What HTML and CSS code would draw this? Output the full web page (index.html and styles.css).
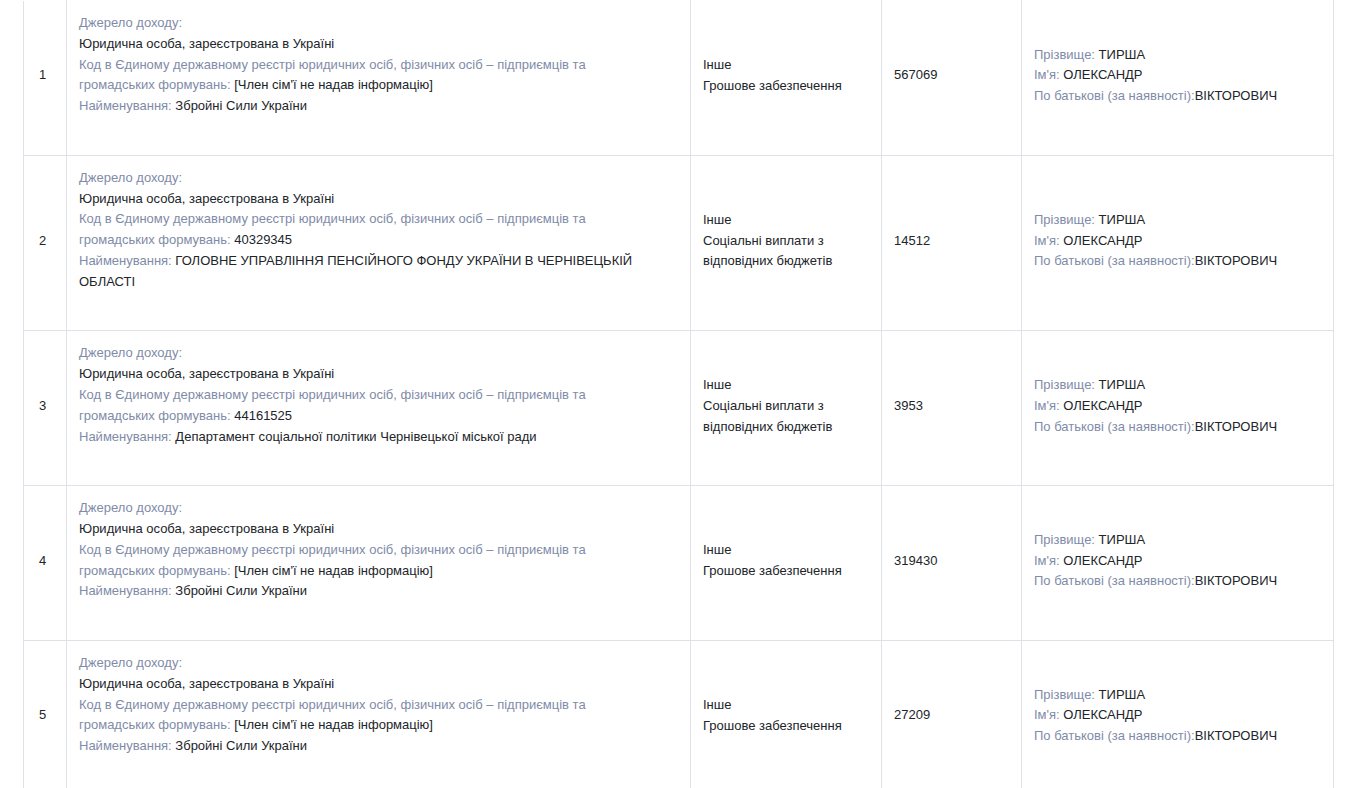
FILE: index.html
```html
<!DOCTYPE html>
<html lang="uk">
<head>
<meta charset="utf-8">
<title>Доходи</title>
<link rel="stylesheet" href="styles.css">
</head>
<body>
<div class="wrap">
<table class="tbl">
  <colgroup>
    <col class="c-num"><col class="c-src"><col class="c-type"><col class="c-sum"><col class="c-who">
  </colgroup>
  <tbody>
    <tr>
      <td class="num">1</td>
      <td class="src"><div class="blk">
        <div><span class="lbl">Джерело доходу:</span></div>
        <div>Юридична особа, зареєстрована в Україні</div>
        <div><span class="lbl">Код в Єдиному державному реєстрі юридичних осіб, фізичних осіб – підприємців та громадських формувань:</span> [Член сім'ї не надав інформацію]</div>
        <div><span class="lbl">Найменування:</span> Збройні Сили України</div>
      </div></td>
      <td class="mid">Інше<br>Грошове забезпечення</td>
      <td class="mid">567069</td>
      <td class="mid"><span class="lbl">Прізвище:</span> ТИРША<br><span class="lbl">Ім'я:</span> ОЛЕКСАНДР<br><span class="lbl">По батькові (за наявності):</span>ВІКТОРОВИЧ</td>
    </tr>
    <tr>
      <td class="num">2</td>
      <td class="src"><div class="blk">
        <div><span class="lbl">Джерело доходу:</span></div>
        <div>Юридична особа, зареєстрована в Україні</div>
        <div><span class="lbl">Код в Єдиному державному реєстрі юридичних осіб, фізичних осіб – підприємців та громадських формувань:</span> 40329345</div>
        <div><span class="lbl">Найменування:</span> ГОЛОВНЕ УПРАВЛІННЯ ПЕНСІЙНОГО ФОНДУ УКРАЇНИ В ЧЕРНІВЕЦЬКІЙ ОБЛАСТІ</div>
      </div></td>
      <td class="mid">Інше<br>Соціальні виплати з відповідних бюджетів</td>
      <td class="mid">14512</td>
      <td class="mid"><span class="lbl">Прізвище:</span> ТИРША<br><span class="lbl">Ім'я:</span> ОЛЕКСАНДР<br><span class="lbl">По батькові (за наявності):</span>ВІКТОРОВИЧ</td>
    </tr>
    <tr>
      <td class="num">3</td>
      <td class="src"><div class="blk">
        <div><span class="lbl">Джерело доходу:</span></div>
        <div>Юридична особа, зареєстрована в Україні</div>
        <div><span class="lbl">Код в Єдиному державному реєстрі юридичних осіб, фізичних осіб – підприємців та громадських формувань:</span> 44161525</div>
        <div><span class="lbl">Найменування:</span> Департамент соціальної політики Чернівецької міської ради</div>
      </div></td>
      <td class="mid">Інше<br>Соціальні виплати з відповідних бюджетів</td>
      <td class="mid">3953</td>
      <td class="mid"><span class="lbl">Прізвище:</span> ТИРША<br><span class="lbl">Ім'я:</span> ОЛЕКСАНДР<br><span class="lbl">По батькові (за наявності):</span>ВІКТОРОВИЧ</td>
    </tr>
    <tr>
      <td class="num">4</td>
      <td class="src"><div class="blk">
        <div><span class="lbl">Джерело доходу:</span></div>
        <div>Юридична особа, зареєстрована в Україні</div>
        <div><span class="lbl">Код в Єдиному державному реєстрі юридичних осіб, фізичних осіб – підприємців та громадських формувань:</span> [Член сім'ї не надав інформацію]</div>
        <div><span class="lbl">Найменування:</span> Збройні Сили України</div>
      </div></td>
      <td class="mid">Інше<br>Грошове забезпечення</td>
      <td class="mid">319430</td>
      <td class="mid"><span class="lbl">Прізвище:</span> ТИРША<br><span class="lbl">Ім'я:</span> ОЛЕКСАНДР<br><span class="lbl">По батькові (за наявності):</span>ВІКТОРОВИЧ</td>
    </tr>
    <tr>
      <td class="num">5</td>
      <td class="src"><div class="blk">
        <div><span class="lbl">Джерело доходу:</span></div>
        <div>Юридична особа, зареєстрована в Україні</div>
        <div><span class="lbl">Код в Єдиному державному реєстрі юридичних осіб, фізичних осіб – підприємців та громадських формувань:</span> [Член сім'ї не надав інформацію]</div>
        <div><span class="lbl">Найменування:</span> Збройні Сили України</div>
      </div></td>
      <td class="mid">Інше<br>Грошове забезпечення</td>
      <td class="mid">27209</td>
      <td class="mid"><span class="lbl">Прізвище:</span> ТИРША<br><span class="lbl">Ім'я:</span> ОЛЕКСАНДР<br><span class="lbl">По батькові (за наявності):</span>ВІКТОРОВИЧ</td>
    </tr>
  </tbody>
</table>
</div>
</body>
</html>
```
FILE: styles.css
```css
html, body {
  margin: 0;
  padding: 0;
  background: #ffffff;
}
body {
  font-family: "Liberation Sans", Arial, sans-serif;
  font-size: 13px;
  line-height: 1.6;
  color: #212529;
  overflow: hidden;
}
.wrap {
  padding: 0 17px 0 23px;
}
.tbl {
  width: 1310px;
  border-collapse: collapse;
  table-layout: fixed;
}
.c-num { width: 43px; }
.c-src { width: 624px; }
.c-type { width: 191px; }
.c-sum { width: 140px; }
.c-who { width: 312px; }
.tbl td {
  border: 1px solid #dfe1e6;
  padding: 12px 12px 16px 12px;
  vertical-align: middle;
  text-align: left;
}
.tbl tr:first-child td {
  border-top-color: #ffffff;
}
.tbl td.num {
  padding-left: 15px;
}
.tbl td.src {
  vertical-align: top;
  padding-right: 36px;
}
.blk {
  padding-bottom: 21.8px;
}
.lbl {
  color: #7f8ba8;
}
```
